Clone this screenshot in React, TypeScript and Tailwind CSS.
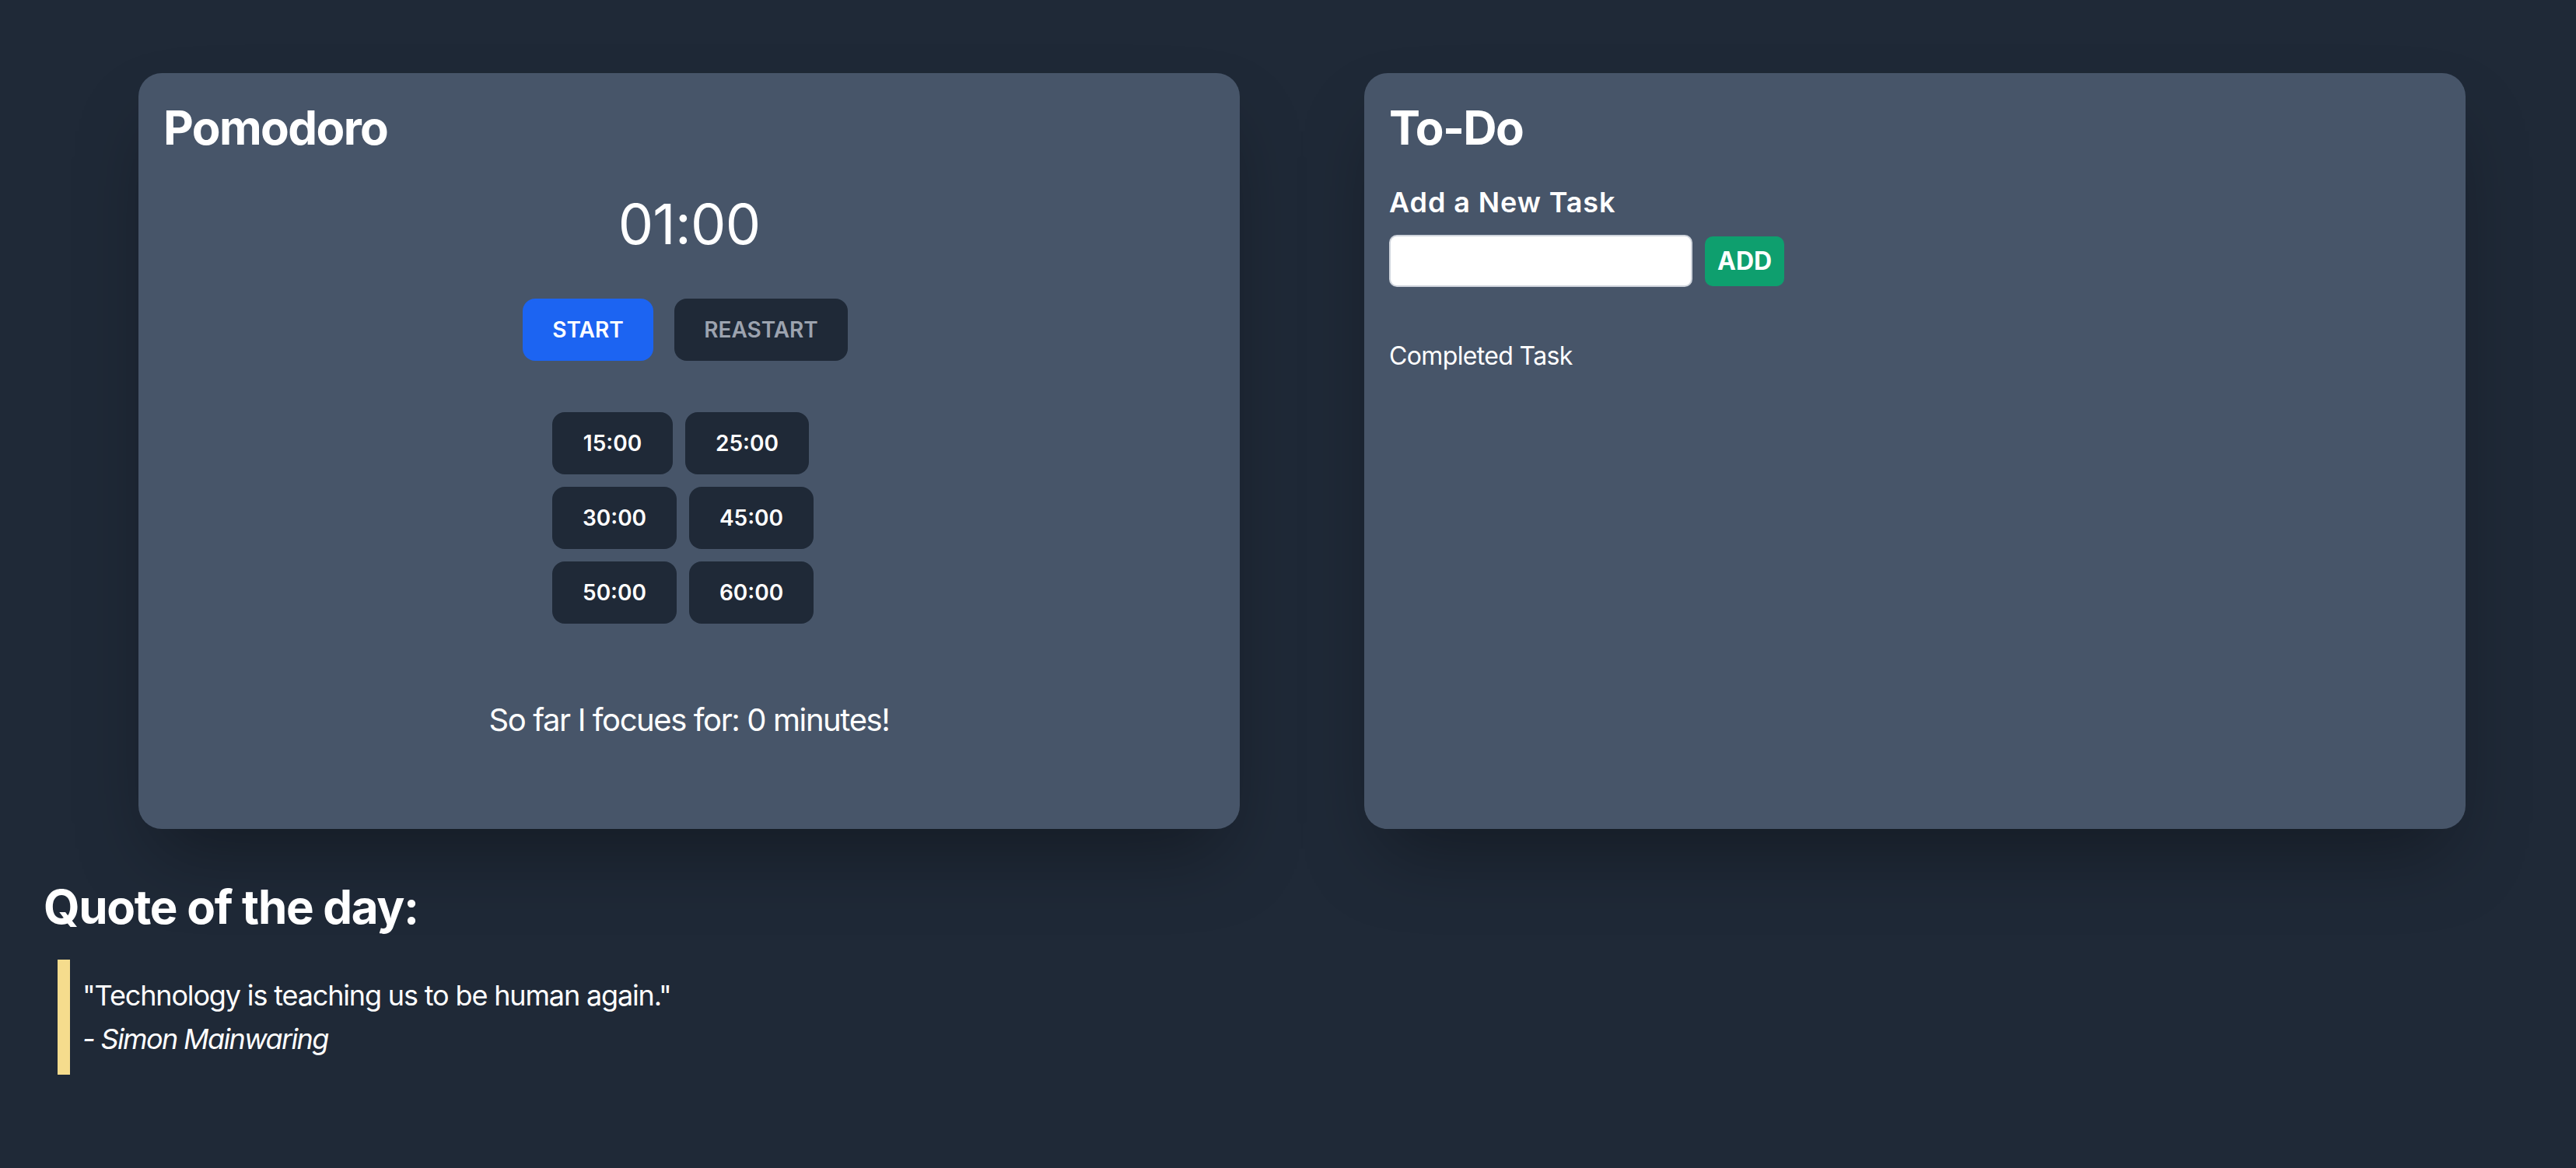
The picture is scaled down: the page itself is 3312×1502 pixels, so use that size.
import React from 'react';

const presets = [
    { label: '15:00', width: 'w-[155px]' },
    { label: '25:00', width: 'w-[159px]' },
    { label: '30:00', width: 'w-[160px]' },
    { label: '45:00', width: 'w-[160px]' },
    { label: '50:00', width: 'w-[160px]' },
    { label: '60:00', width: 'w-[160px]' },
];

function Pomodoro() {
    return (
        <div className="flex h-[972px] w-[1416px] flex-col rounded-[30px] bg-[#475569] px-8 pt-[34px] shadow-[0_50px_100px_-24px_rgba(0,0,0,0.35)]">
            <h1 className="text-[60px] font-bold leading-[72px] tracking-[-0.027em] text-white">Pomodoro</h1>
            <div className="mt-12 text-center text-[72px] font-normal leading-[80px] tracking-[-0.01em] text-white">01:00</div>
            <div className="mt-14 flex justify-center gap-[27px] pr-[10px]">
                <button className="h-20 w-[168px] rounded-2xl bg-[#1c64f2] text-[28px] font-semibold text-white">
                    START
                </button>
                <button className="h-20 w-[223px] rounded-2xl bg-[#1f2937] text-[28px] font-semibold text-[#9ca3af]">
                    REASTART
                </button>
            </div>
            <div className="mx-auto mt-[66px] flex w-[352px] flex-wrap gap-4">
                {presets.map((p) => (
                    <button
                        key={p.label}
                        className={`h-20 ${p.width} rounded-2xl bg-[#1f2937] text-[28px] font-semibold text-white`}
                    >
                        {p.label}
                    </button>
                ))}
            </div>
            <p className="mt-24 text-center text-[40px] leading-[56px] tracking-[-0.035em] text-white">
                So far I focues for: 0 minutes!
            </p>
        </div>
    );
}

function Todo() {
    return (
        <div className="flex h-[972px] w-[1416px] flex-col rounded-[30px] bg-[#475569] px-8 pt-[34px] shadow-[0_50px_100px_-24px_rgba(0,0,0,0.35)]">
            <h1 className="text-[60px] font-bold leading-[72px] tracking-[-0.027em] text-white">To-Do</h1>
            <h2 className="mt-8 text-[36px] font-semibold leading-[56px] tracking-[0.025em] text-white">Add a New Task</h2>
            <div className="mt-[14px] flex items-center gap-4">
                <input
                    type="text"
                    className="h-[67px] w-[390px] rounded-[10px] border-2 border-[#cfd4dc] bg-white px-3 text-[32px] text-black outline-none"
                />
                <button className="h-16 rounded-[10px] bg-[#0e9f6e] px-4 text-[32px] font-bold text-white">ADD</button>
            </div>
            <p className="mt-[65px] text-[32px] leading-[48px] tracking-[-0.02em] text-white">Completed Task</p>
        </div>
    );
}

export default function App() {
    return (
        <div className="min-h-[1502px] bg-[#1f2937] font-['Inter','Liberation_Sans',sans-serif]">
            <div className="flex gap-[160px] pl-[178px] pt-[94px]">
                <Pomodoro />
                <Todo />
            </div>
            <div className="px-14 pt-16">
                <h2 className="text-[60px] font-bold leading-[72px] tracking-[-0.022em] text-white">Quote of the day:</h2>
                <blockquote className="ml-[18px] mt-8 border-l-[16px] border-[#f5dc8d] py-[18px] pl-4 text-[36px] leading-[56px] tracking-[-0.032em] text-white">
                    <p>"Technology is teaching us to be human again."</p>
                    <p className="italic tracking-[-0.045em]">- Simon Mainwaring</p>
                </blockquote>
            </div>
        </div>
    );
}
